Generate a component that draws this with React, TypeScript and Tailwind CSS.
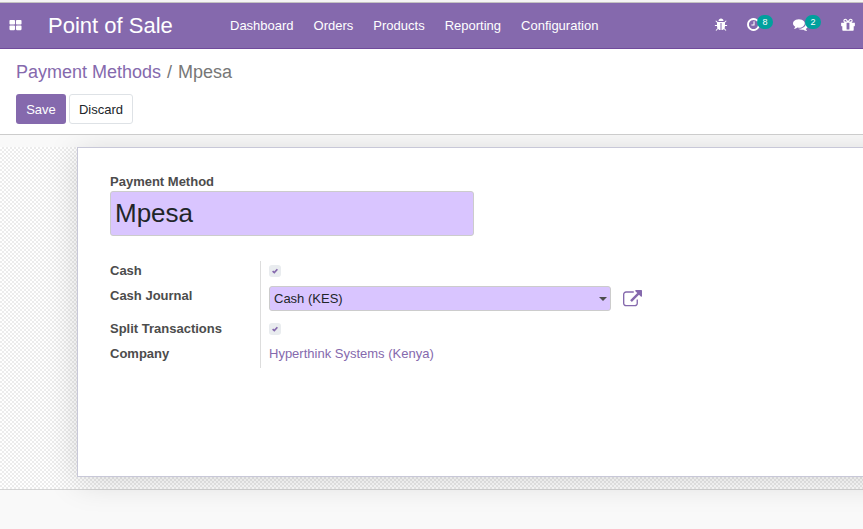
import React from "react";

const ICONS = {
  apps: "M832 1024v384q0 52-38 90t-90 38h-512q-52 0-90-38t-38-90v-384q0-52 38-90t90-38h512q52 0 90 38t38 90zm0-768v384q0 52-38 90t-90 38h-512q-52 0-90-38t-38-90v-384q0-52 38-90t90-38h512q52 0 90 38t38 90zm896 768v384q0 52-38 90t-90 38h-512q-52 0-90-38t-38-90v-384q0-52 38-90t90-38h512q52 0 90 38t38 90zm0-768v384q0 52-38 90t-90 38h-512q-52 0-90-38t-38-90v-384q0-52 38-90t90-38h512q52 0 90 38t38 90z",
  bug: "M1696 960q0 26-19 45t-45 19h-224q0 171-67 290l208 209q19 19 19 45t-19 45q-18 19-45 19t-45-19l-198-197q-5 5-15 13t-42 28.5-65 36.5-82 29-97 13v-896h-128v896q-51 0-101.5-13.5t-87-33-66-39-43.5-32.5l-15-14-183 207q-20 21-48 21-24 0-43-16-19-18-20.5-44.5t15.5-46.5l202-227q-58-114-58-274h-224q-26 0-45-19t-19-45 19-45 45-19h224v-294l-173-173q-19-19-19-45t19-45 45-19 45 19l173 173h844l173-173q19-19 45-19t45 19 19 45-19 45l-173 173v294h224q26 0 45 19t19 45zm-480-576h-640q0-133 93.5-226.5t226.5-93.5 226.5 93.5 93.5 226.5z",
  clock: "M1024 544v448q0 14-9 23t-23 9h-320q-14 0-23-9t-9-23v-64q0-14 9-23t23-9h224v-352q0-14 9-23t23-9h64q14 0 23 9t9 23zm416 352q0-148-73-273t-198-198-273-73-273 73-198 198-73 273 73 273 198 198 273 73 273-73 198-198 73-273zm224 0q0 209-103 385.5t-279.5 279.5-385.5 103-385.5-103-279.5-279.5-103-385.5 103-385.5 279.5-279.5 385.5-103 385.5 103 279.5 279.5 103 385.5z",
  comments: "M1408 768q0 139-94 257t-256.5 186.5-353.5 68.5q-86 0-176-16-124 88-278 128-36 9-86 16h-3q-11 0-20.5-8t-11.5-21q-1-3-1-6.5t.5-6.5 2-6l2.5-5 3.5-5.5 4-5 4.5-5 4-4.5q5-6 23-25t26-29.5 22.5-29 25-38.5 20.5-44q-124-72-195-177t-71-224q0-139 94-257t256.5-186.5 353.5-68.5 353.5 68.5 256.5 186.5 94 257zm384 256q0 120-71 224.5t-195 176.5q10 24 20.5 44t25 38.5 22.5 29 26 29.5 23 25q1 1 4 4.5t4.5 5 4 5 3.5 5.5l2.5 5 2 6 .5 6.5-1 6.5q-3 14-13 22t-22 7q-50-7-86-16-154-40-278-128-90 16-176 16-271 0-472-132 58 4 88 4 161 0 309-45t264-129q125-92 192-212t67-254q0-77-23-152 129 71 204 178t75 230z",
  gift: "M1056 1356v-716h-320v716q0 25 18 38.5t46 13.5h192q28 0 46-13.5t18-38.5zm-456-844h195l-126-161q-26-31-69-31-40 0-68 28t-28 68 28 68 68 28zm688-96q0-40-28-68t-68-28q-43 0-69 31l-125 161h194q40 0 68-28t28-68zm376 256v320q0 14-9 23t-23 9h-96v416q0 40-28 68t-68 28h-1088q-40 0-68-28t-28-68v-416h-96q-14 0-23-9t-9-23v-320q0-14 9-23t23-9h440q-93 0-158.5-65.5t-65.5-158.5 65.5-158.5 158.5-65.5q107 0 168 77l128 165 128-165q61-77 168-77 93 0 158.5 65.5t65.5 158.5-65.5 158.5-158.5 65.5h440q14 0 23 9t9 23z",
  external: "M1408 928v320q0 119-84.5 203.5t-203.5 84.5h-832q-119 0-203.5-84.5t-84.5-203.5v-832q0-119 84.5-203.5t203.5-84.5h704q14 0 23 9t9 23v64q0 14-9 23t-23 9h-704q-66 0-113 47t-47 113v832q0 66 47 113t113 47h832q66 0 113-47t47-113v-320q0-14 9-23t23-9h64q14 0 23 9t9 23zm384-864v512q0 26-19 45t-45 19-45-19l-176-176-652 652q-10 10-23 10t-23-10l-114-114q-10-10-10-23t10-23l652-652-176-176q-19-19-19-45t19-45 45-19h512q26 0 45 19t19 45z",
};

function Icon({ name, className }: { name: keyof typeof ICONS; className: string }) {
  return (
    <svg viewBox="0 0 1792 1792" fill="currentColor" aria-hidden="true" className={`block shrink-0 overflow-visible ${className}`}>
      <path d={ICONS[name]} />
    </svg>
  );
}

function Badge({ children }: { children: React.ReactNode }) {
  return (
    <span className="absolute -top-[2px] left-[11px] flex h-[14px] w-[16px] items-center justify-center rounded-full bg-[#00a09d] text-[9px] leading-none">
      {children}
    </span>
  );
}

function Checkbox() {
  return (
    <span className="flex size-3 items-center justify-center rounded-[3px] bg-[#e9ecef]">
      <svg viewBox="0 0 8 8" className="mb-px size-[6px]" aria-hidden="true">
        <path d="M.8 4.2 3.1 6.2 7.2 1.6" fill="none" stroke="#8569ad" strokeWidth="2.3" />
      </svg>
    </span>
  );
}

const MENU = ["Dashboard", "Orders", "Products", "Reporting", "Configuration"];

export default function App() {
  return (
    <div className="flex h-[529px] w-[863px] flex-col overflow-hidden bg-[#f9f9f9] font-['Liberation_Sans',Arial,sans-serif] text-[13px] leading-[19px] text-[#4c4c4c]">
      <div className="h-[3px] shrink-0 border-b border-[#c4c3c1] bg-[#f5f4f4]" />
      <header className="flex h-[46px] shrink-0 items-center border-b border-[#704a9c] bg-[#8569ad] text-white">
        <Icon name="apps" className="ml-[9px] size-[13px]" />
        <span className="ml-[26px] w-[182px] text-[22px] leading-[30px]">Point of Sale</span>
        <nav className="flex gap-5">
          {MENU.map((m) => (
            <a key={m} className="whitespace-nowrap">{m}</a>
          ))}
        </nav>
        <div className="mb-[2px] ml-auto flex items-center">
          <Icon name="bug" className="mr-[18px] size-[14px]" />
          <span className="relative mr-[32px]">
            <Icon name="clock" className="size-[15px]" />
            <Badge>8</Badge>
          </span>
          <span className="relative mr-[32px]">
            <Icon name="comments" className="size-[15px]" />
            <span className="absolute left-px top-0">
              <Badge>2</Badge>
            </span>
          </span>
          <Icon name="gift" className="mr-[7px] size-[16px]" />
        </div>
      </header>

      <section className="h-[86px] shrink-0 border-b border-[#ccc] bg-white px-4 pt-[9px]">
        <div className="flex h-7 items-center gap-[6px] text-[18px] text-[#777]">
          <a className="text-[#8569ad]">Payment Methods</a>
          <span>/</span>
          <span>Mpesa</span>
        </div>
        <div className="mt-2 flex gap-[3px]">
          <button className="h-[30px] w-[50px] rounded-[3px] bg-[#8569ad] text-white">Save</button>
          <button className="h-[30px] w-[64px] rounded-[3px] border border-[#dee2e6] bg-white text-[#212529]">Discard</button>
        </div>
      </section>

      <main className="flex min-h-0 flex-1 flex-col overflow-hidden pt-3">
        <div className="flex h-[343px] shrink-0 border-b border-[#d4d4d4] bg-[repeating-conic-gradient(#ececec_0_25%,#ffffff_0_50%)] bg-[length:4px_4px] pl-[77px]">
          <div className="h-[330px] w-[900px] shrink-0 border border-[#c8c8d8] bg-white pl-8 pt-6 shadow-[0_5px_30px_rgba(0,0,0,0.15)]">
            <label className="block font-bold">Payment Method</label>
            <div className="flex h-[45px] w-[364px] items-center rounded-[3px] border border-[#ccc] bg-[#d9c5ff] px-1 text-[26px] leading-[39px] text-[#212529]">
              Mpesa
            </div>
            <div className="mt-[25px] flex h-[107px]">
              <div className="flex w-[151px] flex-col border-r border-[#ddd] font-bold">
                <span className="h-[25px]">Cash</span>
                <span className="h-[33px]">Cash Journal</span>
                <span className="h-[25px]">Split Transactions</span>
                <span>Company</span>
              </div>
              <div className="flex flex-col pl-2">
                <div className="h-[25px] pt-1"><Checkbox /></div>
                <div className="flex h-[33px] items-start">
                  <div className="flex h-[25px] w-[342px] items-center justify-between rounded-[3px] border border-[#ccc] bg-[#d9c5ff] pl-1 pr-[3px] text-[#212529]">
                    Cash (KES)
                    <span className="border-x-4 border-t-4 border-x-transparent border-t-[#4c4c4c]" />
                  </div>
                  <Icon name="external" className="ml-3 mt-1 size-[19px] text-[#8569ad]" />
                </div>
                <div className="h-[25px] pt-1"><Checkbox /></div>
                <a className="text-[#8569ad]">Hyperthink Systems (Kenya)</a>
              </div>
            </div>
          </div>
        </div>
      </main>
    </div>
  );
}
